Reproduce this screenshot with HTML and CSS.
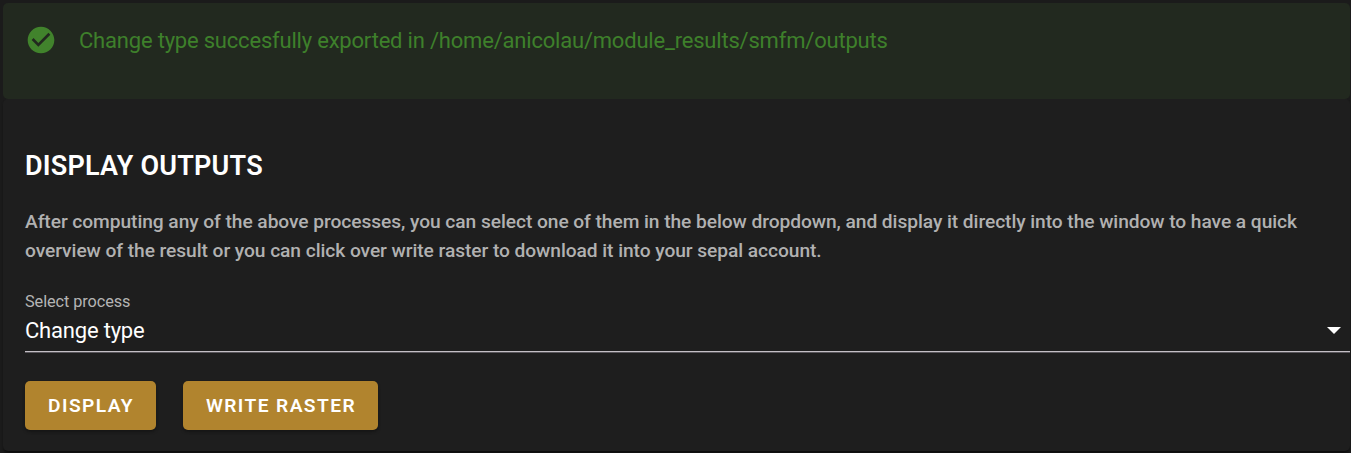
FILE: index.html
```html
<!DOCTYPE html>
<html lang="en">
<head>
<meta charset="utf-8">
<title>Display outputs</title>
<link rel="stylesheet" href="styles.css">
</head>
<body>
<div class="alert">
  <svg class="alert-icon" viewBox="0 0 24 24"><path d="M12 2C6.5 2 2 6.5 2 12S6.5 22 12 22 22 17.5 22 12 17.5 2 12 2M10 17L5 12L6.41 10.59L10 14.17L17.59 6.58L19 8L10 17Z"/></svg>
  <span class="alert-text">Change type succesfully exported in /home/anicolau/module_results/smfm/outputs</span>
</div>
<section class="card">
  <h2 class="title">DISPLAY OUTPUTS</h2>
  <p class="description">After computing any of the above processes, you can select one of them in the below dropdown, and display it directly into the window to have a quick<br>overview of the result or you can click over write raster to download it into your sepal account.</p>
  <div class="select">
    <label class="select-label">Select process</label>
    <div class="select-row"><span class="select-value">Change type</span>
    <svg class="caret" viewBox="0 0 14 7"><path d="M0 0h14L7 7z"/></svg></div>
  </div>
  <div class="actions">
    <button class="btn btn-display">DISPLAY</button>
    <button class="btn btn-write">WRITE RASTER</button>
  </div>
</section>
</body>
</html>
```

FILE: styles.css
```css
* { box-sizing: border-box; }
body {
  margin: 0;
  height: 453px;
  overflow: hidden;
  padding: 3px 1px 0 3px;
  background: #1b1b1b;
  font-family: Roboto, sans-serif;
}
.alert {
  display: flex;
  height: 96px;
  padding: 21px 22px;
  border-radius: 5px;
  background: #22291f;
  color: #3e802b;
}
.alert-icon { width: 32px; height: 32px; fill: #41832c; }
.alert-text { margin-left: 22px; font-size: 22px; letter-spacing: -0.2px; line-height: 33px; white-space: nowrap; }
.card {
  height: 352px;
  padding: 49px 0 0 22px;
  border-radius: 5px;
  background: #1e1e1e;
  box-shadow: 0 3px 3px -1px #0c0c0c;
}
.title { margin: 0; font-size: 27px; font-weight: 600; letter-spacing: 0.22px; line-height: 36px; color: #fff; }
.description { margin: 23px 0 0; font-size: 19.2px; letter-spacing: -0.065px; line-height: 29px; font-weight: 500; color: #b1b1b1; white-space: nowrap; }
.select { margin-top: 27px; height: 61px; border-bottom: 1px solid #59565b; box-shadow: inset 0 -1px #c4c0c6; }
.select-label { display: block; font-size: 16.3px; letter-spacing: -0.08px; line-height: 20px; color: #b4b4b4; }
.select-row { display: flex; justify-content: space-between; align-items: center; height: 37px; padding-right: 9px; }
.select-value { font-size: 22px; letter-spacing: -0.2px; color: #fff; }
.caret { width: 14px; height: 7px; fill: #fff; }
.actions { display: flex; gap: 27px; margin-top: 28px; }
.btn {
  height: 49px;
  padding: 0 0 0 1px;
  border: 0;
  border-radius: 5px;
  background: #b1842e;
  box-shadow: 0 2px 3px #151515;
  color: #fff;
  font: 600 19.2px Roboto, sans-serif;
  letter-spacing: 1.4px;
}
.btn-display { width: 131px; }
.btn-write { width: 195px; }
```
